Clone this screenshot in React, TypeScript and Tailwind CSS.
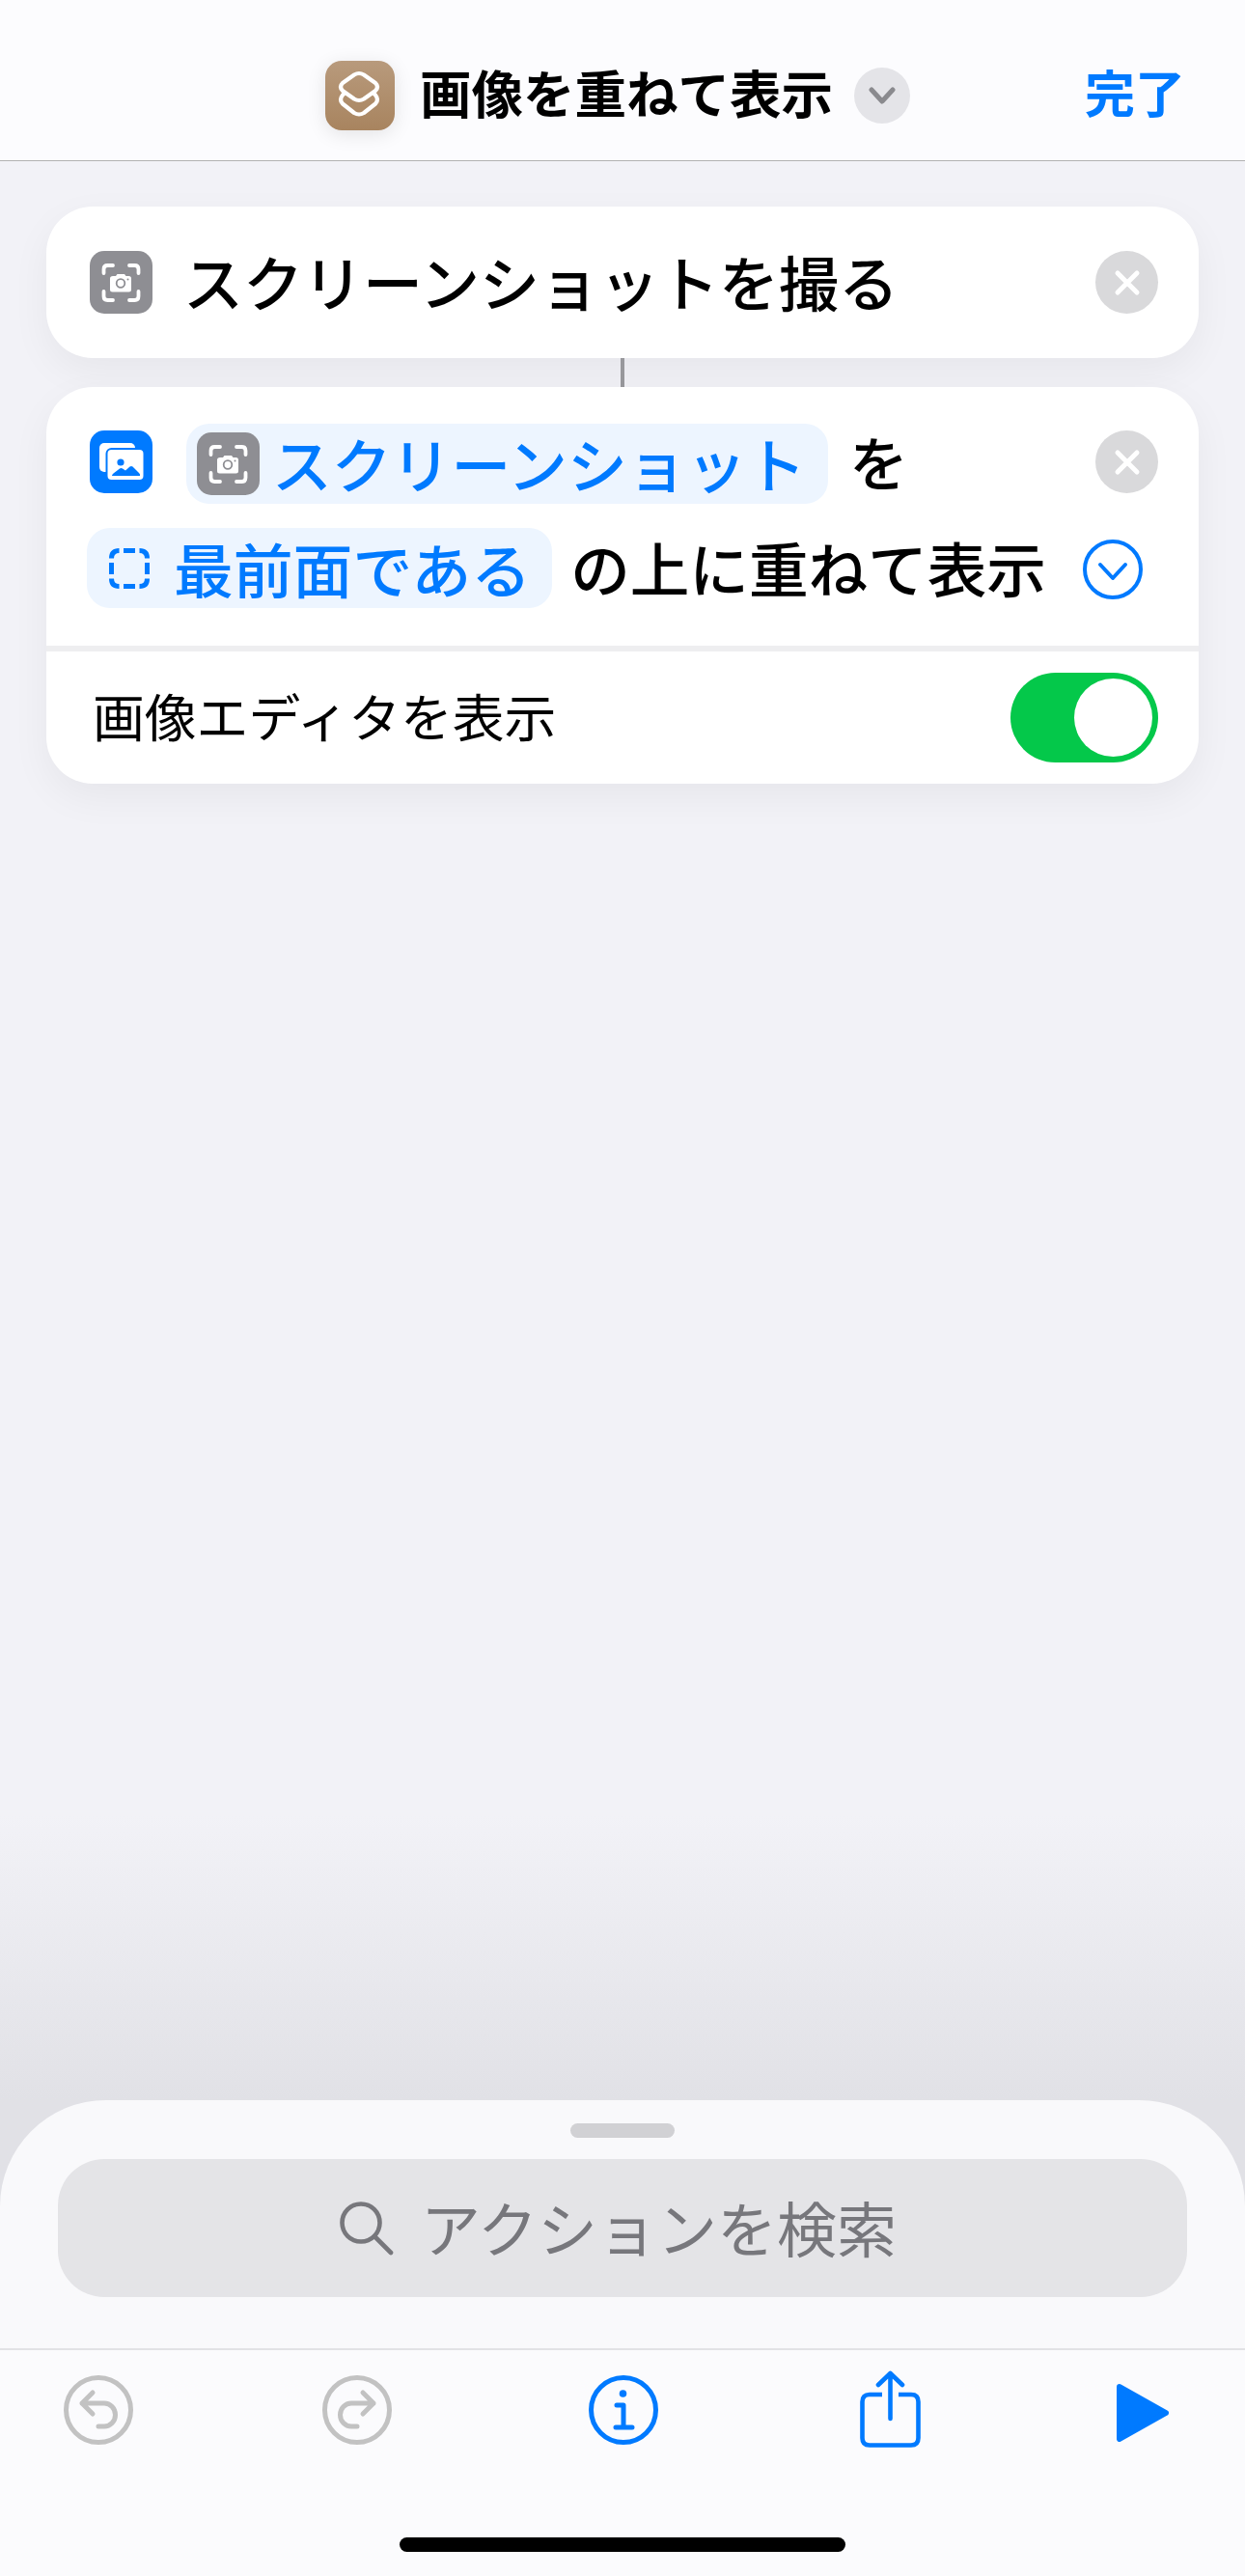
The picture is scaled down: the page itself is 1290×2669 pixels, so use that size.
import React from 'react';

const BLUE = '#007aff';

function ScreenshotIcon() {
  return (
    <div className="w-[65px] h-[65px] rounded-[15px] bg-[#8e8e93] shrink-0">
      <svg viewBox="0 0 65 65" className="w-full h-full" fill="none" stroke="#fff" strokeWidth="3.8" strokeLinecap="round">
        <path d="M14.5 23 V19 Q14.5 15 18.5 15 H24" />
        <path d="M41 15 H46.5 Q50.5 15 50.5 19 V23" />
        <path d="M14.5 42 V47 Q14.5 51 18.5 51 H24" />
        <path d="M41 51 H46.5 Q50.5 51 50.5 47 V42" />
        <path
          d="M24 26 H27 L28.5 24 H36 L37.5 26 H40.5 Q43 26 43 28.5 V40 Q43 42.5 40.5 42.5 H23.5 Q21 42.5 21 40 V28.5 Q21 26 24 26 Z"
          fill="#fff"
          stroke="none"
        />
        <circle cx="32" cy="33.5" r="4.3" fill="#fff" stroke="#8e8e93" strokeWidth="1.8" />
        <circle cx="39.5" cy="29.5" r="1" fill="#8e8e93" stroke="none" />
      </svg>
    </div>
  );
}

function PhotosIcon() {
  return (
    <div className="w-[65px] h-[65px] rounded-[15px] bg-[#007aff] shrink-0">
      <svg viewBox="0 0 65 65" className="w-full h-full">
        <rect x="10" y="13" width="37" height="30" rx="5" fill="#fff" />
        <rect x="17.5" y="19" width="39" height="33" rx="5" fill="#fff" stroke={BLUE} strokeWidth="2" />
        <rect x="20" y="21.5" width="34" height="28" rx="3" fill="#fff" />
        <circle cx="32" cy="33" r="3.6" fill={BLUE} />
        <path d="M23 47 Q23 45.5 24.5 44.5 L31 39.5 Q32.5 38.5 34 39.5 L37 41.5 L41.5 37.5 Q43 36.5 44.5 37.5 L51 44 Q52.5 45.5 52 47 Z" fill={BLUE} />
      </svg>
    </div>
  );
}

function CloseButton() {
  return (
    <div className="w-[65px] h-[65px] rounded-full bg-[#d9d9db] shrink-0 flex items-center justify-center">
      <svg viewBox="0 0 28 28" className="w-[28px] h-[28px]" fill="none" stroke="#fff" strokeWidth="5" strokeLinecap="round">
        <path d="M4 4 L24 24 M24 4 L4 24" />
      </svg>
    </div>
  );
}

export default function App() {
  return (
    <div className="w-[1290px] h-[2669px] flex flex-col overflow-hidden font-['Noto_Sans_CJK_JP',sans-serif] bg-[linear-gradient(to_bottom,#f2f2f7_0px,#f2f2f7_1880px,#e1e1e6_2176px,#e1e1e6_2669px)]">
      {/* Header */}
      <div className="h-[167px] shrink-0 flex items-start pl-[337px] pr-[62px] bg-[#fcfcfe] border-b border-[#b2b2b2]">
        <div className="w-[72px] h-[72px] mt-[63px] rounded-[17px] bg-[linear-gradient(to_bottom,#b89a7c,#a8845f)] shadow-[0_4px_20px_rgba(0,0,0,0.1)] shrink-0">
          <svg viewBox="0 0 72 72" className="w-full h-full" fill="none" stroke="#fff" strokeWidth="4.2" strokeLinecap="round" strokeLinejoin="round">
            <path d="M30 14.5 Q35 11.5 40 14.5 L52 23 Q56 27 52 31 L40 39.5 Q35 42.5 30 39.5 L18 31 Q14 27 18 23 Z" />
            <path d="M20.5 33 L18 35.5 Q14 40.5 18 44.5 L30 54 Q35 57 40 54 L52 44.5 Q56 40.5 52 35.5 L49.5 33" />
          </svg>
        </div>
        <span className="ml-[26px] mt-[64px] text-[53.5px] leading-[62px] font-bold text-black whitespace-nowrap">画像を重ねて表示</span>
        <div className="ml-[22px] mt-[70px] w-[58px] h-[58px] rounded-full bg-[#e4e4e8] flex items-center justify-center shrink-0">
          <svg viewBox="0 0 28 18" className="w-[28px] h-[18px]" fill="none" stroke="#8a8a8e" strokeWidth="5" strokeLinecap="round" strokeLinejoin="round">
            <path d="M3 3 L14 15 L25 3" />
          </svg>
        </div>
        <span className="ml-auto mt-[64px] text-[52px] leading-[62px] font-bold text-[#007aff] whitespace-nowrap">完了</span>
      </div>

      {/* Action list */}
      <div className="flex-1 flex flex-col pt-[47px] px-[48px] items-stretch">
        <div className="h-[157px] rounded-[48px] bg-white shadow-[0_14px_40px_rgba(0,0,0,0.05)] flex items-center pl-[45px] pr-[42px]">
          <ScreenshotIcon />
          <span className="ml-[32px] -mt-[4px] text-[62px] leading-[72px] font-medium text-black whitespace-nowrap">スクリーンショットを撮る</span>
          <div className="ml-auto">
            <CloseButton />
          </div>
        </div>

        <div className="w-[4px] h-[30px] bg-[#98989c] self-center" />

        <div className="rounded-[48px] bg-white shadow-[0_14px_40px_rgba(0,0,0,0.05)] overflow-hidden">
          <div className="pt-[38px] pb-[39px] pl-[42px] pr-[42px] flex flex-col gap-[25px]">
            <div className="flex items-start">
              <div className="ml-[3px] mt-[7px]">
                <PhotosIcon />
              </div>
              <div className="ml-[35px] h-[83px] rounded-[24px] bg-[#edf5ff] flex items-center pl-[11px] pr-[23px]">
                <ScreenshotIcon />
                <span className="ml-[13px] -mt-[4px] text-[61.8px] leading-[72px] font-medium text-[#007aff] whitespace-nowrap">スクリーンショット</span>
              </div>
              <span className="ml-[22px] -mt-[3px] text-[61px] leading-[83px] font-medium text-black">を</span>
              <div className="ml-auto mt-[7px]">
                <CloseButton />
              </div>
            </div>
            <div className="flex items-center">
              <div className="h-[83px] rounded-[24px] bg-[#edf5ff] flex items-center pl-[23px] pr-[22px]">
                <svg viewBox="0 0 42 42" className="w-[42px] h-[42px] shrink-0" fill="none" stroke={BLUE} strokeWidth="5">
                  <path d="M2.5 10.5 Q2.5 2.5 10.5 2.5 M15 2.5 H27 M31.5 2.5 Q39.5 2.5 39.5 10.5 M39.5 15 V27 M39.5 31.5 Q39.5 39.5 31.5 39.5 M27 39.5 H15 M10.5 39.5 Q2.5 39.5 2.5 31.5 M2.5 27 V15" />
                </svg>
                <span className="ml-[25px] -mt-[2px] text-[61.8px] leading-[72px] font-medium text-[#007aff] whitespace-nowrap">最前面である</span>
              </div>
              <span className="ml-[19px] -mt-[2px] text-[61.6px] leading-[83px] font-medium text-black whitespace-nowrap">の上に重ねて表示</span>
              <svg viewBox="0 0 62 62" className="ml-auto mr-[16px] mt-[2px] w-[62px] h-[62px] shrink-0" fill="none" stroke={BLUE} strokeWidth="4" strokeLinecap="round" strokeLinejoin="round">
                <circle cx="31" cy="31" r="29" />
                <path d="M18 26 L31 40 L44 26" />
              </svg>
            </div>
          </div>
          <div className="h-[6px] bg-[#eeeef0]" />
          <div className="h-[137px] flex items-center pl-[48px] pr-[42px]">
            <span className="-mt-[6px] text-[53.8px] leading-[64px] text-black whitespace-nowrap">画像エディタを表示</span>
            <div className="ml-auto w-[153px] h-[93px] rounded-full bg-[#04c84a] flex items-center justify-end pr-[6px]">
              <div className="w-[81px] h-[81px] rounded-full bg-white" />
            </div>
          </div>
        </div>
      </div>

      {/* Bottom sheet */}
      <div className="h-[493px] shrink-0 rounded-t-[110px] bg-[#f9f9fb] flex flex-col">
        <div className="w-[108px] h-[15px] rounded-full bg-[#d1d1d4] self-center mt-[24px]" />
        <div className="mx-[60px] mt-[22px] h-[143px] w-[1170px] rounded-[48px] bg-[#e4e4e7] flex items-center pl-[292px]">
          <svg viewBox="0 0 56 56" className="w-[56px] h-[56px] shrink-0" fill="none" stroke="#77777c" strokeWidth="4.6" strokeLinecap="round">
            <circle cx="22" cy="22" r="19.5" />
            <path d="M36 36 L53 53" />
          </svg>
          <span className="ml-[28px] -mt-[4px] text-[62px] leading-[72px] text-[#77777c] whitespace-nowrap">アクションを検索</span>
        </div>
        <div className="mt-[53px] border-t-2 border-[#e2e2e5] flex-1 bg-[#fbfbfd] flex flex-col">
          <div className="h-[194px] shrink-0 flex items-start pt-[26px] pl-[66px]">
            <svg viewBox="0 0 72 72" className="w-[72px] h-[72px] shrink-0" fill="none" stroke="#c2c2c2" strokeWidth="5" strokeLinecap="round" strokeLinejoin="round">
              <circle cx="36" cy="36" r="33.5" />
              <path d="M30 18 L19 29 L30 40 M19 29 H42 A11.5 12 0 0 1 42 53 H36" />
            </svg>
            <svg viewBox="0 0 72 72" className="ml-[196px] w-[72px] h-[72px] shrink-0" fill="none" stroke="#c2c2c2" strokeWidth="5" strokeLinecap="round" strokeLinejoin="round">
              <circle cx="36" cy="36" r="33.5" />
              <path d="M42 18 L53 29 L42 40 M53 29 H30 A11.5 12 0 0 0 30 53 H36" />
            </svg>
            <svg viewBox="0 0 72 72" className="ml-[204px] w-[72px] h-[72px] shrink-0" fill="none" stroke={BLUE} strokeWidth="5" strokeLinecap="round" strokeLinejoin="round">
              <circle cx="36" cy="36" r="33.5" />
              <circle cx="35.5" cy="19" r="3.8" fill={BLUE} stroke="none" />
              <path d="M29 31 H36 V54 M28 54 H45" />
            </svg>
            <svg viewBox="0 0 64 80" className="ml-[209px] -mt-[5px] w-[64px] h-[80px] shrink-0" fill="none" stroke={BLUE} strokeWidth="4.6" strokeLinecap="round" strokeLinejoin="round">
              <path d="M23 25 H10 Q2.5 25 2.5 32.5 V70 Q2.5 77.5 10 77.5 H53 Q60.5 77.5 60.5 70 V32.5 Q60.5 25 53 25 H40" strokeLinecap="butt" />
              <path d="M31.5 50 V3 M19 15 L31.5 3 L44 15" />
            </svg>
            <svg viewBox="0 0 54 60" className="ml-[202px] mt-[9px] w-[54px] h-[60px] shrink-0" fill={BLUE} stroke={BLUE} strokeWidth="6" strokeLinejoin="round">
              <path d="M3 3 L51 30 L3 57 Z" />
            </svg>
          </div>
          <div className="w-[462px] h-[15px] rounded-full bg-black self-center" />
        </div>
      </div>
    </div>
  );
}
